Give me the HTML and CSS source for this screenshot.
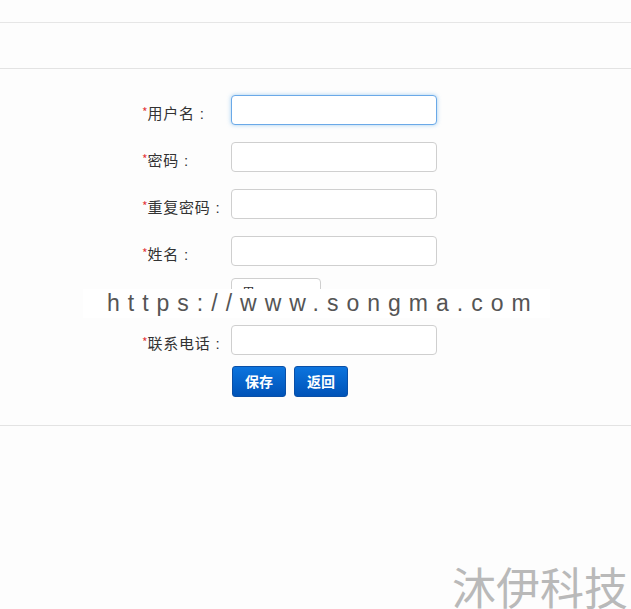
FILE: index.html
```html
<!DOCTYPE html>
<html>
<head>
<meta charset="utf-8">
<link rel="stylesheet" href="styles.css">
</head>
<body>
<div class="top"></div>
<div class="toolbar"></div>
<div class="panel">
  <form class="form">
    <div class="row">
      <label class="label"><span class="req">*</span>用户名<span class="colon">:</span></label>
      <input class="input focus" type="text">
    </div>
    <div class="row">
      <label class="label"><span class="req">*</span>密码<span class="colon">:</span></label>
      <input class="input" type="password">
    </div>
    <div class="row">
      <label class="label"><span class="req">*</span>重复密码<span class="colon">:</span></label>
      <input class="input" type="password">
    </div>
    <div class="row">
      <label class="label"><span class="req">*</span>姓名<span class="colon">:</span></label>
      <input class="input" type="text">
    </div>
    <div class="row row-select">
      <label class="label"><span class="req">*</span>性别<span class="colon">:</span></label>
      <div class="select">男<span class="caret"></span></div>
    </div>
    <div class="row">
      <label class="label"><span class="req">*</span>联系电话<span class="colon">:</span></label>
      <input class="input" type="text">
    </div>
    <div class="row row-btn">
      <span class="label"></span>
      <button type="button" class="btn">保存</button>
      <button type="button" class="btn">返回</button>
    </div>
  </form>
  <div class="banner">https://www.songma.com</div>
</div>
<div class="mark">沐伊科技</div>
</body>
</html>
```
FILE: styles.css
```css
html, body {
  margin: 0;
  padding: 0;
  background: #fdfdfd;
  font-family: "Noto Sans CJK SC", "Liberation Sans", sans-serif;
  font-size: 15px;
  color: #333;
  height: 609px;
  overflow: hidden;
}
body {
  position: relative;
}
.top {
  height: 22px;
  border-bottom: 1px solid #e6e6e6;
}
.toolbar {
  height: 45px;
  border-bottom: 1px solid #e3e3e3;
}
.panel {
  position: relative;
  padding: 26px 0 29px;
  border-bottom: 1px solid #e3e3e3;
}
.form {
  display: flex;
  flex-direction: column;
  gap: 17px;
}
.row {
  display: flex;
  align-items: center;
  height: 30px;
}
.label {
  width: 231px;
  padding-left: 142px;
  box-sizing: border-box;
  text-align: left;
  line-height: 30px;
  padding-top: 5px;
  white-space: nowrap;
  letter-spacing: 0.7px;
}
.req {
  color: #e4393c;
  font-size: 12px;
  vertical-align: 2px;
  letter-spacing: 0;
}
.colon {
  display: inline-block;
  margin-left: 5px;
  font-family: "Liberation Sans", sans-serif;
}
.input {
  width: 206px;
  height: 30px;
  box-sizing: border-box;
  border: 1px solid #cfcfcf;
  border-radius: 4px;
  background: #fff;
  margin: 0;
  padding: 0 6px;
}
.input.focus {
  border-color: #6aa9e8;
  box-shadow: 0 0 4px rgba(102, 175, 233, 0.6);
}
.row-select {
  margin-top: -5px;
  margin-bottom: 2px;
  height: 28px;
  align-items: flex-start;
}
.select {
  position: relative;
  width: 90px;
  height: 28px;
  box-sizing: border-box;
  border: 1px solid #cfcfcf;
  border-radius: 4px;
  background: #fff;
  padding: 3px 0 0 10px;
  font-size: 13px;
}
.caret {
  position: absolute;
  right: 6px;
  top: 11px;
  width: 0;
  height: 0;
  border-left: 3px solid transparent;
  border-right: 3px solid transparent;
  border-top: 4px solid #333;
}
.row-btn {
  margin-top: -6px;
  gap: 8px;
}
.row-btn .label {
  width: 232px;
  margin-right: -8px;
}
.btn {
  width: 54px;
  height: 31px;
  border: 1px solid #0a4fa6;
  border-radius: 3px;
  background: linear-gradient(#0c74de, #0053b8);
  color: #fff;
  font-family: "Noto Sans CJK SC", sans-serif;
  font-weight: bold;
  font-size: 14px;
  padding: 0;
  margin: 0;
}
.banner {
  position: absolute;
  left: 83px;
  top: 220px;
  width: 467px;
  height: 29px;
  background: #fff;
  color: #555;
  font-family: "Liberation Sans", sans-serif;
  font-size: 23px;
  letter-spacing: 8px;
  line-height: 29px;
  padding-left: 24px;
  box-sizing: border-box;
  white-space: nowrap;
  overflow: hidden;
}
.mark {
  position: absolute;
  left: 452px;
  top: 562px;
  font-size: 44px;
  line-height: 48px;
  color: #b9b9b9;
  white-space: nowrap;
}
```
